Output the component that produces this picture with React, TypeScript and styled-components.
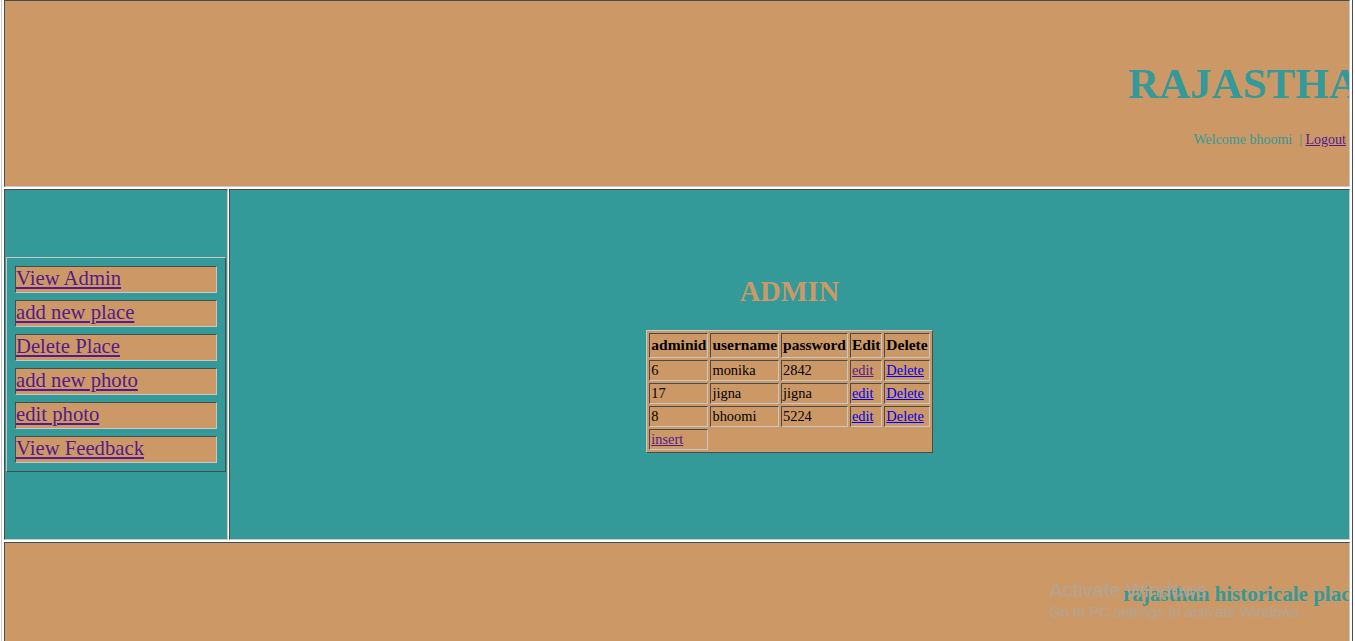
import React from "react";
import styled, { createGlobalStyle } from "styled-components";

const TAN = "#cc9966";
const TEAL = "#339999";
const LIGHT = "#c8c8c8";
const DARK = "#4b4b4b";
const VISITED = "#551a8b";
const LINK = "#0000ee";

const GlobalStyle = createGlobalStyle`
  html, body {
    margin: 0;
    padding: 0;
    background: #ffffff;
    overflow: hidden;
  }
  body {
    width: 1355px;
    height: 641px;
    font-family: "Liberation Serif", "Times New Roman", serif;
  }
`;

const Frame = styled.div`
  box-sizing: border-box;
  width: 1352px;
  margin: -3px 0 0 1px;
  border: 1px solid;
  border-color: ${LIGHT} ${DARK} ${DARK} ${LIGHT};
  padding: 2px;
  display: grid;
  grid-template-columns: 224px 1121px;
  grid-template-rows: 187px 351px 140px;
  column-gap: 1px;
  row-gap: 2px;
`;

const Cell = styled.div<{ $bg: string; $wide?: boolean }>`
  box-sizing: border-box;
  border: 1px solid;
  border-color: ${DARK} ${LIGHT} ${LIGHT} ${DARK};
  background: ${(p) => p.$bg};
  grid-column: ${(p) => (p.$wide ? "1 / -1" : "auto")};
  overflow: hidden;
  display: flex;
  flex-direction: column;
`;

const Title = styled.h1`
  align-self: flex-end;
  width: 221px;
  margin: 58px 0 0;
  overflow: hidden;
  white-space: nowrap;
  font-size: 43px;
  line-height: 50px;
  font-weight: bold;
  color: ${TEAL};
`;

const WelcomeLine = styled.div`
  margin-top: 23px;
  padding-right: 3px;
  text-align: right;
  font-size: 14px;
  line-height: 16px;
  color: ${TEAL};
  white-space: pre;
`;

const A = styled.a<{ $visited?: boolean }>`
  color: ${(p) => (p.$visited ? VISITED : LINK)};
  text-decoration: underline;
  cursor: pointer;
`;

const SideCell = styled(Cell)`
  justify-content: center;
  align-items: center;
`;

const Menu = styled.div`
  box-sizing: border-box;
  width: 220px;
  border: 1px solid;
  border-color: ${LIGHT} ${DARK} ${DARK} ${LIGHT};
  padding: 8px;
  display: flex;
  flex-direction: column;
  gap: 7px;
`;

const MenuItem = styled.div`
  box-sizing: border-box;
  height: 27px;
  padding: 0 0 2px;
  background: ${TAN};
  border: 1px solid;
  border-color: ${DARK} ${LIGHT} ${LIGHT} ${DARK};
  font-size: 20.7px;
  line-height: 23px;
  white-space: nowrap;
`;

const MainCell = styled(Cell)`
  justify-content: center;
  align-items: center;
  gap: 22px;
`;

const Heading = styled.h2`
  margin: 0;
  font-size: 28.4px;
  line-height: 32px;
  font-weight: bold;
  color: ${TAN};
`;

const DataTable = styled.table`
  border-collapse: separate;
  border-spacing: 2px;
  background: ${TAN};
  border: 1px solid;
  border-color: ${LIGHT} ${DARK} ${DARK} ${LIGHT};
  font-family: "Liberation Serif", "Times New Roman", serif;
`;

const Th = styled.th`
  border: 1px solid;
  border-color: ${DARK} ${LIGHT} ${LIGHT} ${DARK};
  padding: 2px 1px 3px;
  font-size: 15.5px;
  line-height: 18px;
  font-weight: bold;
  color: #000;
  white-space: nowrap;
`;

const Td = styled.td`
  border: 1px solid;
  border-color: ${DARK} ${LIGHT} ${LIGHT} ${DARK};
  padding: 1px 1px 2px;
  font-size: 14.4px;
  line-height: 16px;
  color: #000;
  text-align: left;
  white-space: nowrap;
`;

const FooterTitle = styled.div`
  align-self: flex-end;
  width: 226px;
  margin-top: 39px;
  overflow: hidden;
  white-space: nowrap;
  font-size: 21px;
  line-height: 24px;
  font-weight: bold;
  color: ${TEAL};
`;

const Watermark = styled.div`
  position: fixed;
  left: 1049px;
  top: 578px;
  font-family: "Liberation Sans", Arial, sans-serif;
  color: rgba(172, 166, 160, 0.9);
  pointer-events: none;
  white-space: nowrap;
`;

const WatermarkTitle = styled.div`
  font-size: 20px;
  line-height: 24px;
`;

const WatermarkText = styled.div`
  margin-top: 1px;
  font-size: 14.7px;
  line-height: 18px;
`;

const menu = [
  "View Admin",
  "add new place",
  "Delete Place",
  "add new photo",
  "edit photo",
  "View Feedback",
];

const rows = [
  { id: "6", user: "monika", pass: "2842", editVisited: true },
  { id: "17", user: "jigna", pass: "jigna", editVisited: false },
  { id: "8", user: "bhoomi", pass: "5224", editVisited: false },
];

export default function App() {
  return (
    <>
      <GlobalStyle />
      <Frame>
        <Cell $bg={TAN} $wide>
          <Title>RAJASTHAN HISTORICALE PLACES</Title>
          <WelcomeLine>
            {"Welcome bhoomi\u00a0 | "}
            <A $visited>Logout</A>
          </WelcomeLine>
        </Cell>
        <SideCell $bg={TEAL}>
          <Menu>
            {menu.map((m) => (
              <MenuItem key={m}>
                <A $visited>{m}</A>
              </MenuItem>
            ))}
          </Menu>
        </SideCell>
        <MainCell $bg={TEAL}>
          <Heading>ADMIN</Heading>
          <DataTable>
            <tbody>
              <tr>
                <Th>adminid</Th>
                <Th>username</Th>
                <Th>password</Th>
                <Th>Edit</Th>
                <Th>Delete</Th>
              </tr>
              {rows.map((r) => (
                <tr key={r.id}>
                  <Td>{r.id}</Td>
                  <Td>{r.user}</Td>
                  <Td>{r.pass}</Td>
                  <Td>
                    <A $visited={r.editVisited}>edit</A>
                  </Td>
                  <Td>
                    <A>Delete</A>
                  </Td>
                </tr>
              ))}
              <tr>
                <Td>
                  <A $visited>insert</A>
                </Td>
              </tr>
            </tbody>
          </DataTable>
        </MainCell>
        <Cell $bg={TAN} $wide>
          <FooterTitle>rajasthan historicale places</FooterTitle>
        </Cell>
      </Frame>
      <Watermark>
        <WatermarkTitle>Activate Windows</WatermarkTitle>
        <WatermarkText>Go to PC settings to activate Windows.</WatermarkText>
      </Watermark>
    </>
  );
}
